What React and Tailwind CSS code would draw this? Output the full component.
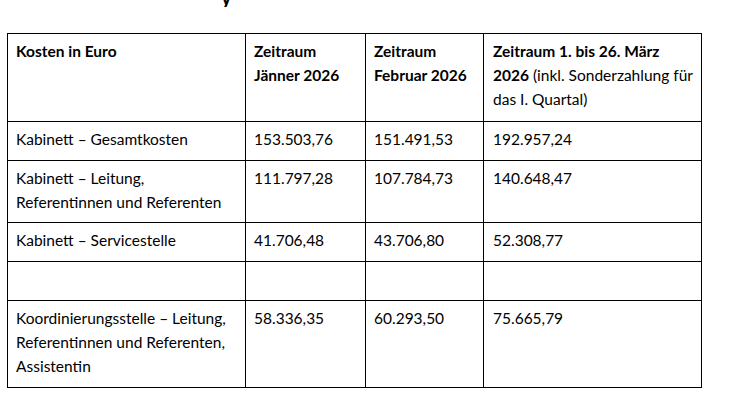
import React from "react";

const font = { fontFamily: "Lato, 'Open Sans', sans-serif" };

function Cell({ children, className = "" }) {
  return (
    <td className={`border border-black align-top px-[8px] pt-[5px] pb-[6px] ${className}`}>
      {children}
    </td>
  );
}

export default function App() {
  return (
    <div className="w-[731px] h-[411px] bg-white overflow-hidden text-black text-[15.5px] leading-[24px]" style={font}>
      <div className="h-[7px] overflow-hidden pl-[221px]">
        <div className="font-bold text-[20px] leading-[20px] -mt-[13px]">y</div>
      </div>
      <div className="pt-[26px] pl-[7px]">
        <table className="border-collapse table-fixed w-[694px]">
          <colgroup>
            <col className="w-[238px]" />
            <col className="w-[120px]" />
            <col className="w-[118px]" />
            <col className="w-[218px]" />
          </colgroup>
          <tbody>
            <tr className="h-[88px]">
              <Cell className="font-bold">Kosten in Euro</Cell>
              <Cell className="font-bold">Zeitraum<br />Jänner 2026</Cell>
              <Cell className="font-bold">Zeitraum<br />Februar 2026</Cell>
              <Cell className="pl-[9px]">
                <span className="font-bold">Zeitraum 1. bis 26. März</span>
                <br />
                <span className="font-bold">2026</span> (inkl. Sonderzahlung für
                <br />
                das I. Quartal)
              </Cell>
            </tr>
            <tr className="h-[39px]">
              <Cell>Kabinett – Gesamtkosten</Cell>
              <Cell>153.503,76</Cell>
              <Cell>151.491,53</Cell>
              <Cell className="pl-[9px]">192.957,24</Cell>
            </tr>
            <tr className="h-[62px]">
              <Cell>Kabinett – Leitung,<br />Referentinnen und Referenten</Cell>
              <Cell>111.797,28</Cell>
              <Cell>107.784,73</Cell>
              <Cell className="pl-[9px]">140.648,47</Cell>
            </tr>
            <tr className="h-[39px]">
              <Cell>Kabinett – Servicestelle</Cell>
              <Cell>41.706,48</Cell>
              <Cell>43.706,80</Cell>
              <Cell className="pl-[9px]">52.308,77</Cell>
            </tr>
            <tr className="h-[39px]">
              <Cell>&nbsp;</Cell>
              <Cell>&nbsp;</Cell>
              <Cell>&nbsp;</Cell>
              <Cell>&nbsp;</Cell>
            </tr>
            <tr className="h-[87px]">
              <Cell>Koordinierungsstelle – Leitung,<br />Referentinnen und Referenten,<br />Assistentin</Cell>
              <Cell>58.336,35</Cell>
              <Cell>60.293,50</Cell>
              <Cell className="pl-[9px]">75.665,79</Cell>
            </tr>
          </tbody>
        </table>
      </div>
    </div>
  );
}
